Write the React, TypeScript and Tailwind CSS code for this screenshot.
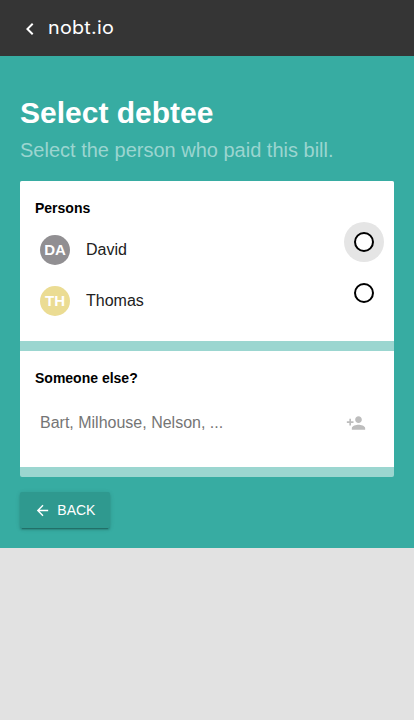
import React from "react";
import { MdArrowBack, MdChevronLeft, MdPersonAdd } from "react-icons/md";

type Person = { name: string; initials: string; color: string; focused: boolean };

const persons: Person[] = [
  { name: "David", initials: "DA", color: "bg-[#918f92]", focused: true },
  { name: "Thomas", initials: "TH", color: "bg-[#ebdc93]", focused: false },
];

function PersonRow({ person }: { person: Person }) {
  return (
    <li className="flex h-[51px] items-start pl-[5px]">
      <span
        className={`mt-2 flex size-[30px] items-center justify-center rounded-full text-[15px] font-bold text-white ${person.color}`}
      >
        {person.initials}
      </span>
      <span className="mt-[11px] ml-4 flex-1 text-base leading-6 text-[#212121]">{person.name}</span>
      <button
        aria-label={`Select ${person.name}`}
        className={`-mt-[5px] -mr-[5px] flex size-10 items-center justify-center rounded-full ${person.focused ? "bg-[#e5e5e5]" : ""}`}
      >
        <span className="size-5 rounded-full border-2 border-black bg-white" />
      </button>
    </li>
  );
}

export default function App() {
  return (
    <div className="min-h-screen bg-[#e2e2e2] font-['Liberation_Sans',Arial,sans-serif]">
      <header className="flex h-14 items-center bg-[#353535] pl-[18px] text-white">
        <MdChevronLeft size={24} className="mt-[2px]" />
        <span className="-mt-px ml-[6px] origin-left scale-x-[1.1] font-['Inter',sans-serif] text-[18px] leading-6 tracking-[0.2px]">
          nobt.io
        </span>
      </header>
      <main className="h-[492px] bg-[#37aca2] px-5 pt-[39px]">
        <h1 className="text-[30px] leading-9 font-bold text-white">Select debtee</h1>
        <h2 className="mt-[7px] text-xl leading-6 text-[#9bd5d0]">Select the person who paid this bill.</h2>
        <div className="mt-[19px] overflow-hidden rounded-[2px] bg-[#9bd6d0]">
          <section className="h-40 bg-white px-[15px] pt-[19px]">
            <h3 className="text-sm leading-4 font-bold text-black">Persons</h3>
            <ul className="mt-[11px]">
              {persons.map((person) => (
                <PersonRow key={person.name} person={person} />
              ))}
            </ul>
          </section>
          <section className="mt-2.5 mb-2.5 h-[116px] bg-white px-[15px] pt-[19px]">
            <h3 className="text-sm leading-4 font-bold text-black">Someone else?</h3>
            <div className="mt-[25px] flex h-6 items-center pr-[13px] pl-[5px]">
              <input
                placeholder="Bart, Milhouse, Nelson, ..."
                className="min-w-0 flex-1 text-base leading-6 outline-none placeholder:text-[#757575]"
              />
              <MdPersonAdd size={20} className="text-[#bdbdbd]" />
            </div>
          </section>
        </div>
        <button className="mt-[15px] flex h-9 w-[90px] items-center rounded-[2px] bg-[#2f998f] pl-[14px] text-sm text-white shadow-[0_2px_2px_rgba(0,0,0,0.14),0_3px_1px_-2px_rgba(0,0,0,0.2),0_1px_5px_rgba(0,0,0,0.12)]">
          <MdArrowBack size={17} />
          <span className="ml-[6.3px]">BACK</span>
        </button>
      </main>
    </div>
  );
}
